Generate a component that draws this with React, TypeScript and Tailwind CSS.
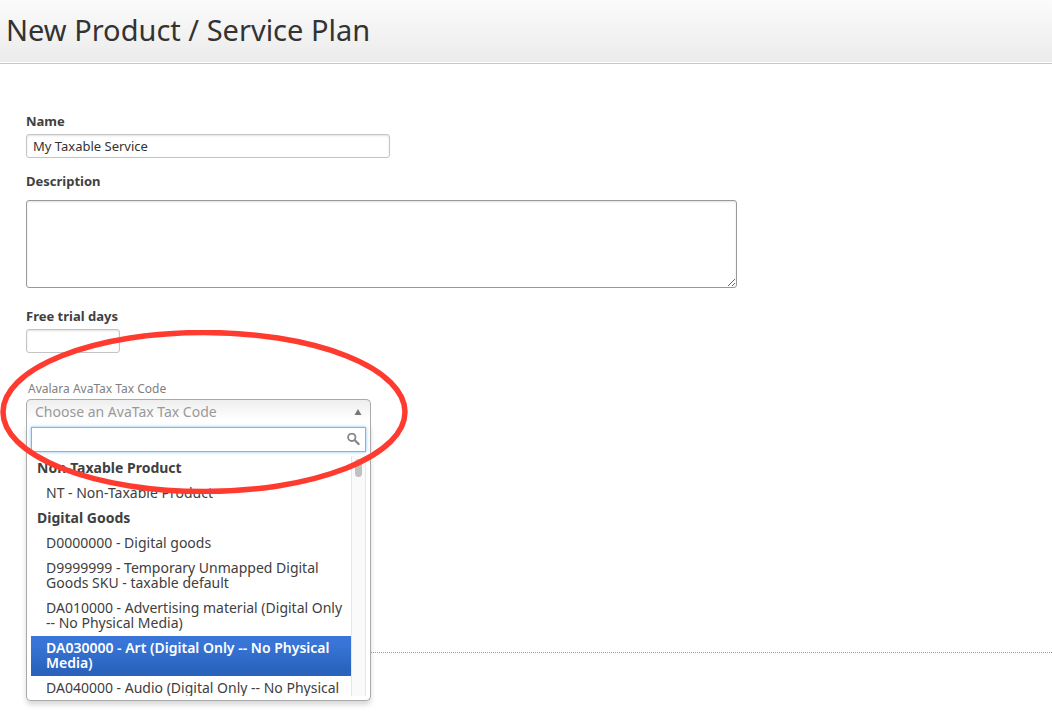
import { useState } from 'react';

interface TaxCode {
  code: string;
  label: string;
}

interface TaxGroup {
  name: string;
  items: TaxCode[];
}

const TAX_GROUPS: TaxGroup[] = [
  {
    name: 'Non-Taxable Product',
    items: [{ code: 'NT', label: 'Non-Taxable Product' }],
  },
  {
    name: 'Digital Goods',
    items: [
      { code: 'D0000000', label: 'Digital goods' },
      { code: 'D9999999', label: 'Temporary Unmapped Digital Goods SKU - taxable default' },
      { code: 'DA010000', label: 'Advertising material (Digital Only -- No Physical Media)' },
      { code: 'DA030000', label: 'Art (Digital Only -- No Physical Media)' },
      { code: 'DA040000', label: 'Audio (Digital Only -- No Physical Media)' },
    ],
  },
];

const inputClass =
  'block h-6 rounded-[3px] border border-[#c4c4c4] bg-white px-1.5 text-[13px] text-[#333] shadow-[inset_0_1px_2px_rgba(0,0,0,0.12)] outline-none';
const labelClass = 'block text-[13px] leading-[18px] font-bold text-[#404040]';

function SearchIcon() {
  return (
    <svg className="pointer-events-none absolute top-1.5 right-1.5 h-[13px] w-[13px]" viewBox="0 0 13 13" fill="none" stroke="#858585">
      <circle cx="4.8" cy="4.3" r="3.7" strokeWidth="1.8" />
      <path d="M7.8 7.3 L11.6 11" strokeWidth="2.3" strokeLinecap="round" />
    </svg>
  );
}

function TaxCodeSelect() {
  const [highlighted, setHighlighted] = useState('DA030000');
  const [search, setSearch] = useState('');

  return (
    <div className="relative w-[345px]">
      <button
        type="button"
        id="tax-code"
        aria-expanded="true"
        className="flex h-[25px] w-full items-center justify-between rounded-t-[5px] border border-b-0 border-[#aaa] bg-linear-to-b from-[#eee] to-white to-80% px-2 text-left text-sm text-[#999]"
      >
        <span>Choose an AvaTax Tax Code</span>
        <svg className="h-[6px] w-2" viewBox="0 0 8 6">
          <path d="M4 0 L7.5 6 H0.5 Z" fill="#777" />
        </svg>
      </button>

      {/* Dropdown */}
      <div className="absolute top-full left-0 z-10 w-full rounded-b-[5px] border border-t-0 border-[#aaa] bg-white px-1 pt-[3px] pb-1 shadow-[0_4px_5px_rgba(0,0,0,0.15)]">
        <div className="relative">
          <input
            type="text"
            aria-label="Search tax codes"
            value={search}
            onChange={(e) => setSearch(e.target.value)}
            className="block h-[25px] w-full border border-[#9dadc0] bg-white pr-6 pl-1.5 text-[13px] shadow-[0_0_3px_rgba(90,165,240,0.7)] outline-none"
          />
          <SearchIcon />
        </div>
        <div className="mt-1 flex h-60 overflow-hidden">
          <ul className="flex-1">
            {TAX_GROUPS.map((group) => (
              <li key={group.name}>
                <div className="px-1.5 pt-1 pb-1.5 text-sm leading-[15px] font-bold text-[#404040]">{group.name}</div>
                <ul>
                  {group.items.map((item) => (
                    <li
                      key={item.code}
                      onMouseEnter={() => setHighlighted(item.code)}
                      className={`cursor-pointer pt-1 pr-1.5 pb-1.5 pl-[15px] text-sm leading-[15px] ${
                        item.code === highlighted
                          ? 'bg-linear-to-b from-[#3875d7] from-20% to-[#2a62bc] to-90% font-semibold text-white'
                          : 'text-[#404040]'
                      }`}
                    >
                      {item.code} - {item.label}
                    </li>
                  ))}
                </ul>
              </li>
            ))}
          </ul>
          {/* Scrollbar */}
          <div className="w-[15px] border-x border-[#e6e6e6] bg-[#fafafa] px-[3px] pt-[3px]">
            <div className="h-[18px] rounded-full bg-[#c1c1c1]" />
          </div>
        </div>
      </div>
    </div>
  );
}

export default function App() {
  const [name, setName] = useState('My Taxable Service');
  const [description, setDescription] = useState('');
  const [trialDays, setTrialDays] = useState('');

  return (
    <div className="min-h-screen overflow-hidden bg-white font-['Lucida_Grande','Noto_Sans',sans-serif]">
      {/* Header */}
      <header className="flex h-16 items-center border-b border-[#c8c8c8] bg-linear-to-b from-[#fbfbfb] to-[#ebebeb] px-1.5 pb-1 shadow-[inset_0_-1px_0_#fff]">
        <h1 className="text-[29px] leading-9 text-[#333]">New Product / Service Plan</h1>
      </header>

      <form className="pt-12 pl-[26px]">
        <label htmlFor="name" className={labelClass}>Name</label>
        <input
          id="name"
          type="text"
          value={name}
          onChange={(e) => setName(e.target.value)}
          className={`${inputClass} mt-1 w-[364px]`}
        />

        <label htmlFor="description" className={`${labelClass} mt-3.5`}>Description</label>
        <textarea
          id="description"
          value={description}
          onChange={(e) => setDescription(e.target.value)}
          className="mt-2.5 block h-[88px] w-[711px] resize rounded-[3px] border border-[#999] p-1.5 text-[13px] text-[#333] shadow-[inset_0_1px_2px_rgba(0,0,0,0.12)] outline-none"
        />

        <label htmlFor="trial-days" className={`${labelClass} mt-[19px]`}>Free trial days</label>
        <input
          id="trial-days"
          type="text"
          value={trialDays}
          onChange={(e) => setTrialDays(e.target.value)}
          className={`${inputClass} mt-1 w-[94px]`}
        />

        <div className="relative mt-7">
          <label htmlFor="tax-code" className="mb-0.5 block pl-0.5 text-xs leading-4 text-[#808080]">
            Avalara AvaTax Tax Code
          </label>
          <TaxCodeSelect />

          {/* Red highlight ring */}
          <svg
            className="pointer-events-none absolute -top-[51px] -left-[26px] z-20 h-[164px] w-[408px]"
            viewBox="0 0 408 164"
            fill="none"
          >
            <ellipse cx="204" cy="82" rx="201" ry="79.5" stroke="#ff3b30" strokeWidth="5.5" />
          </svg>
        </div>

        <hr className="mt-[228px] border-t border-dotted border-[#999]" />
      </form>
    </div>
  );
}
